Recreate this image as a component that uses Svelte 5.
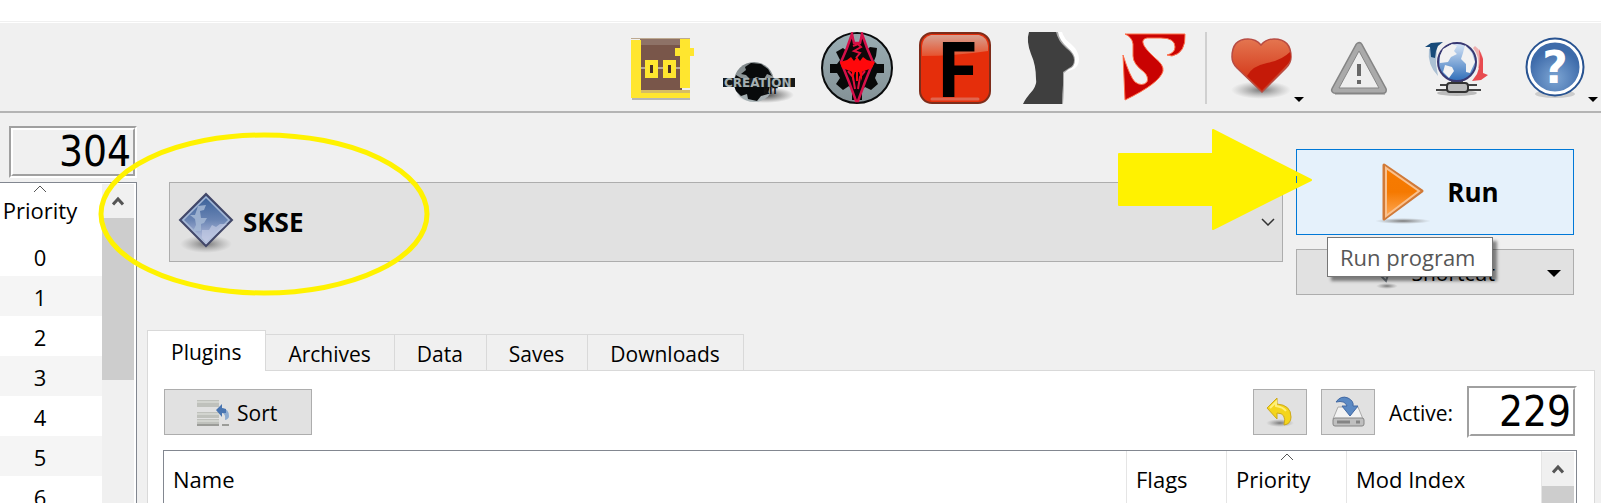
<script lang="ts">
	let tabs = ['Plugins', 'Archives', 'Data', 'Saves', 'Downloads'];
	let activeTab = $state('Plugins');
	let program = $state('SKSE');
	let priorities = [0, 1, 2, 3, 4, 5, 6];
</script>

{#snippet lcd(value: number, label: string)}
	<output class="lcd" aria-label={label}><span>{value}</span></output>
{/snippet}

{#snippet sortMark()}
	<svg class="sort-mark" width="14" height="8" viewBox="0 0 14 8"><path d="M1 7 7 1l6 6" fill="none" stroke="#555" /></svg>
{/snippet}

{#snippet scrollbar(thumb: string)}
	<div class="scrollbar">
		<button class="scroll-up" aria-label="Scroll up">
			<svg width="12" height="10" viewBox="0 0 12 10"><path d="M1 8.500 6 3l5 5.500" fill="none" stroke="#555" stroke-width="3" /></svg>
		</button>
		<div class="thumb {thumb}"></div>
	</div>
{/snippet}

<div class="window">
	<div class="titlebar"></div>
	<header class="toolbar">
		<div class="tools">
			<button aria-label="LOOT">
				<svg viewBox="0 0 72 72">
					<path d="M7 67h58" stroke="#b5b5b5" stroke-width="2" />
					<path fill="#79564a" d="M15 7h42v51H15z" />
					<path fill="#8e7267" d="M15 7h42v6H15z" />
					<path d="M6 6.500h59" stroke="#bda991" />
					<path d="M16 36h40" stroke="#b6a7a0" stroke-width="2" />
					<path fill="#ffe62f" d="M6 8h10v52h49v6H6z" />
					<path d="M16 59.500h49" stroke="#d6bd63" stroke-width="3" />
					<path fill="#ffe62f" d="M55 7h10v9h4v8h-4v32H55V24h-5v-8h5z" />
					<g fill="#4b3028" stroke="#ffe62f" stroke-width="5">
						<path d="M22.500 30.500h8v13h-8zM40.500 30.500h8v13h-8z" />
					</g>
				</svg>
			</button>
			<button aria-label="Creation Kit">
				<svg viewBox="0 0 72 72">
					<defs>
						<radialGradient id="ck-shadow"><stop stop-color="#444" /><stop offset="1" stop-color="#555" stop-opacity="0" /></radialGradient>
						<linearGradient id="ck-globe" x2="0" y2="1"><stop stop-color="#7d8587" /><stop offset="1" stop-color="#aab4b7" /></linearGradient>
					</defs>
					<ellipse cx="42" cy="63" rx="29" ry="8" fill="url(#ck-shadow)" />
					<circle cx="31" cy="50" r="20" fill="url(#ck-globe)" />
					<path fill="#080a0b" d="m22 35 6-4 10 1 7 5 4 7-5-2-3 5-8-2-5 3-5-5-5-1 5-4zM13 43l5 3 7 1v5l7 3 15-2-2 9-7 2-4 5-9-2-1-5-6 2-5-5-3-8z" />
					<path fill="#15191a" d="M0 46h72v9H0z" />
					<text class="creation" x="1" y="55">CREATION</text>
					<text class="kit" x="40" y="62">KIT</text>
				</svg>
			</button>
			<button aria-label="Skyrim">
				<svg viewBox="0 0 72 72">
					<defs><linearGradient id="sky" x2="0" y2="1"><stop stop-color="#9aaeb4" /><stop offset="1" stop-color="#849196" /></linearGradient></defs>
					<circle cx="36" cy="36" r="35" fill="url(#sky)" stroke="#090b0c" stroke-width="2" />
					<path fill="#080909" d="m30 12 12 0 2 7 5-4 7 1-1 8-2 5 3 3h7v9h-7l-2 5 3 6-7 6-6-3-3 3v10h-10V57l-3-3-6 4-7-6 4-6-3-5H9v-9h7l3-4-4-8 7-4 5 4z" />
					<path fill="#0d0809" stroke="#d5104a" stroke-width="2.500" d="m31 2-5 14-6 14 8 20 7 19h2l7-19 8-20-6-14-5-14-2 9H33z" />
					<path fill="#91a3a8" d="M33 2h6l-1 6h-4z" />
					<path d="M32 14l5-2 3 3-7 4 6 2-4 5m-8 13 5 6 2 12m10-18-5 6-2 12" fill="none" stroke="#e0103f" stroke-width="2" />
					<path fill="#ff080b" d="m19 30 7-2 4-3 3 4 3-4 3 4 3-4 4 3 8 2-3 6-8 3-2 1v9l-3-9h-1v9h-2v-9h-1l-3 9v-9l-2-1-8-3z" />
				</svg>
			</button>
			<button aria-label="FNIS">
				<svg viewBox="0 0 72 72">
					<defs><linearGradient id="gloss" x2="0" y2="1"><stop stop-color="#d8a090" /><stop offset="1" stop-color="#e6532e" /></linearGradient></defs>
					<rect x="1" y="1" width="70" height="70" rx="12" fill="#e52e0b" stroke="#7d2d1b" stroke-width="2" />
					<path fill="url(#gloss)" d="M12 3h48q8 2 9 11v5Q36 24 3 24V14q1-9 9-11z" />
					<path d="M13 67h46" stroke="#e0654f" stroke-width="3" stroke-linecap="round" />
					<text class="letter-f" x="17" y="65">F</text>
				</svg>
			</button>
			<button aria-label="BodySlide">
				<svg viewBox="0 0 72 72">
					<path fill="#fff" d="M38 0h7q2 7 9 12 8 7 8 15 0 9-8 11l-8 3z" />
					<path fill="#a8a8a8" d="M38 0h3q1 8 10 16 7 6 7 12 0 7-6 9l-5 4q0 20-1 31h-8z" />
					<path fill="#3f3f3f" d="M12 0h27q2 9 10 16 8 6 8 12 0 6-5 8-3 2-6 4v13q-1 9-1 19H6q2-5 10-14 4-6 3-11 0-14-5-25-5-13-2-22z" />
				</svg>
			</button>
			<button aria-label="Script tool">
				<svg viewBox="0 0 72 72">
					<path fill="#c90202" stroke="#ff704b" d="M10 2h60q1 19-13 22l-5-1q8-2 8-8Q60 6 46 6H32q-5 1-4 5 1 5 12 15 9 7 8 13-3 12-38 29L8 23q7 22 12 27 7 5 12 0 2-5-3-10-11-8-11-16V12q-1-7-8-10z" />
				</svg>
			</button>
		</div>
		<div class="separator"></div>
		<div class="tools">
			<button aria-label="Endorse">
				<svg viewBox="0 0 72 72">
					<defs>
						<radialGradient id="shadow"><stop stop-color="#777" /><stop offset="1" stop-color="#999" stop-opacity="0" /></radialGradient>
						<linearGradient id="heart" x2="0" y2="1"><stop stop-color="#e47650" /><stop offset="1" stop-color="#cf260a" /></linearGradient>
					</defs>
					<ellipse cx="36" cy="58" rx="30" ry="9" fill="url(#shadow)" />
					<path fill="url(#heart)" stroke="#b84c43" stroke-width="1.500" d="M36 13q5-6 13-6 17 0 17 18 0 6-5 11L37 60 12 36q-5-5-5-11Q7 7 23 7q8 0 13 6z" />
					<path fill="#c51a08" d="M65 20q3 8-5 15L37 58 22 44q5-10 20-13 15-3 23-11z" />
				</svg>
				<span class="menu-arrow"></span>
			</button>
			<button aria-label="Notifications">
				<svg viewBox="0 0 72 72">
					<path d="M12 62h50" stroke="#bbb" stroke-width="2" />
					<path d="M36 14 12 58h48z" fill="#e7e7e7" stroke="#858585" stroke-width="8" stroke-linejoin="round" />
					<path d="M36 14 12 58h48z" fill="#e7e7e7" stroke="#aaa" stroke-width="5" stroke-linejoin="round" />
					<path d="M36 19 16 56h40z" fill="#eee" stroke="#858585" />
					<path d="M36 32v12m0 4v4" stroke="#686868" stroke-width="4" />
				</svg>
			</button>
			<button aria-label="Check for updates">
				<svg viewBox="0 0 72 72">
					<defs><linearGradient id="sea" x2="0" y2="1"><stop stop-color="#d9e7f8" /><stop offset="1" stop-color="#2f6eb9" /></linearGradient></defs>
					<ellipse cx="36" cy="61" rx="20" ry="3" fill="#bbb" />
					<path d="M19 53h37M15 58h45" stroke="#444" stroke-width="2" />
					<path d="M30 49h12v3H30z" fill="#555" />
					<rect x="26" y="51" width="21" height="9" rx="3" fill="#bbb" stroke="#333" stroke-width="2" />
					<path fill="#acc1d4" d="M8 17q-2 16 9 27l-2-12 1-17z" />
					<path fill="#174a79" d="m4 15 6-4 12-1-5 4-2 5-1 7-4-1-1-10z" />
					<path fill="#efb0af" d="M54 14q8 6 8 15l-1 8-4-1q2-12-5-20z" />
					<path fill="#e84b50" d="m58 17 4 10v14l5 2-7 5-9 1 5-7q4-9 2-25z" />
					<circle cx="36" cy="30" r="19" fill="url(#sea)" stroke="#393973" stroke-width="2" />
					<path fill="#f2f2f2" d="m22 17 9-5 5 2-3 5 3 3-6 3-3 5-8 1 0-7zm22-4 7 8 3 9-5 11-4-1 0-8-5-5 2-6zM24 33l7 2 2 4-5 7-6-6z" />
				</svg>
			</button>
			<button aria-label="Help">
				<svg viewBox="0 0 72 72">
					<defs><radialGradient id="help" cy=".7"><stop stop-color="#7da5d3" /><stop offset="1" stop-color="#3e6baa" /></radialGradient></defs>
					<ellipse cx="36" cy="62" rx="20" ry="4" fill="#ccc" />
					<circle cx="36" cy="35" r="28" fill="url(#help)" stroke="#285391" stroke-width="3" />
					<circle cx="36" cy="35" r="26" fill="none" stroke="#fff" stroke-width="3" />
					<text class="question" x="36" y="51">?</text>
				</svg>
				<span class="menu-arrow"></span>
			</button>
		</div>
	</header>

	<div class="content">
		<aside class="mods">
			{@render lcd(304, 'Active mods')}
			<div class="mod-list">
				<table>
					<thead>
						<tr><th>{@render sortMark()}Priority</th></tr>
					</thead>
					<tbody>
						{#each priorities as priority}
							<tr><td>{priority}</td></tr>
						{/each}
					</tbody>
				</table>
				{@render scrollbar('long')}
			</div>
		</aside>

		<main>
			<section class="launcher">
				<div class="program">
					<select bind:value={program} aria-label="Program">
						<option>SKSE</option>
					</select>
					<svg class="program-icon" width="64" height="64" viewBox="0 0 64 64">
						<defs><linearGradient id="diamond" x2="0" y2="1"><stop stop-color="#345d96" /><stop offset=".5" stop-color="#6984b3" /><stop offset="1" stop-color="#d4d5ef" /></linearGradient></defs>
						<ellipse cx="32" cy="54" rx="26" ry="9" fill="url(#shadow)" />
						<path d="M32 4 58 30 32 56 6 30z" fill="url(#diamond)" stroke="#424768" stroke-width="2" />
						<path d="M32 7 55 30 32 53 9 30z" fill="none" stroke="#a8b9d5" stroke-width="1.500" />
						<path fill="#a5b9d5" opacity=".85" d="m24 16 8-1-2 5-4 1 1 7h6l-3 5-3 1v7l-8 0 3-6-1-6-5-4 5 0z" />
						<path fill="#c0c9e3" opacity=".7" d="m28 48 0-8 7 0 3-5 4 2 4-3h7L32 53z" />
					</svg>
					<svg class="program-arrow" width="14" height="8" viewBox="0 0 14 8"><path d="m1 1 6 6 6-6" fill="none" stroke="#333" stroke-width="1.500" /></svg>
				</div>
				<div class="actions">
					<button class="run">
						<svg width="64" height="64" viewBox="0 0 64 64">
							<defs>
								<linearGradient id="run" x2="0" y2="1"><stop stop-color="#f77b00" /><stop offset=".5" stop-color="#f57900" /><stop offset="1" stop-color="#ffad5e" /></linearGradient>
							</defs>
							<ellipse cx="32" cy="61" rx="28" ry="3" fill="url(#shadow)" />
							<path d="M13 5v54l38-28z" fill="url(#run)" stroke="#d17a37" stroke-width="3" stroke-linejoin="round" />
							<path d="M15 8v48l33-25z" fill="none" stroke="#fac18d" stroke-width="2" />
						</svg>
						Run
					</button>
					<button class="shortcut">
						<svg width="24" height="36" viewBox="0 0 24 36">
							<ellipse cx="12" cy="31" rx="11" ry="3" fill="url(#shadow)" />
							<path d="m4 19 7 7 2-6" fill="#d8dee3" stroke="#737b82" stroke-width="2" />
						</svg>
						Shortcut
						<span class="drop"></span>
					</button>
					<div class="tooltip" role="tooltip">Run program</div>
				</div>
			</section>

			<div class="tabs" role="tablist">
				{#each tabs as tab}
					<button role="tab" aria-selected={activeTab === tab} class:active={activeTab === tab} onclick={() => (activeTab = tab)}>{tab}</button>
				{/each}
			</div>

			<section class="pane">
				<div class="pane-bar">
					<button class="sort">
						<svg width="34" height="30" viewBox="0 0 34 30">
							<path fill="#bfc1bc" d="M1 2h22v7H1zM1 14h22v6H1zM1 21h22v6H1z" />
							<path d="M1 4h22M1 16h22M1 23h22" stroke="#d2d4cf" stroke-width="2" />
							<path d="M1 27h22m3 0h7" stroke="#9b9c98" stroke-width="2" />
							<path fill="#8dabd0" d="M26 10q7 1 7 8 0 3-4 4 1-6-3-7z" />
							<path fill="#4975b1" d="m20 12 6-6v4l4 1v4h-4v4z" />
						</svg>
						Sort
					</button>
					<div class="pane-tools">
						<button class="square" aria-label="Restore backup">
							<svg width="32" height="32" viewBox="0 0 32 32">
								<ellipse cx="16" cy="27" rx="14" ry="4" fill="url(#shadow)" />
								<path fill="#f4d51c" stroke="#cda91b" d="M3 12 13 2v6q14 1 14 13 0 7-7 8 3-12-7-12v6z" />
								<path d="m6 12 6-6v4q7 1 10 5" fill="none" stroke="#ffef79" stroke-width="2" />
							</svg>
						</button>
						<button class="square" aria-label="Create backup">
							<svg width="36" height="34" viewBox="0 0 36 34">
								<path fill="#f3f3f3" stroke="#aaa" d="m8 12-5 12h30l-5-12z" />
								<rect x="3" y="23" width="31" height="8" rx="2" fill="#bfbfbf" stroke="#858585" />
								<path d="M7 27h13m6 0h4" stroke="#858585" stroke-width="3" />
								<path fill="#5b89c3" stroke="#4168a3" d="M6 7Q11 0 18 3q6 3 5 8h5l-8 10-8-10h5q-2-6-11-4z" />
							</svg>
						</button>
						<span class="active-label">Active:</span>
						{@render lcd(229, 'Active plugins')}
					</div>
				</div>
				<div class="plugin-list">
					<table>
						<thead>
							<tr>
								<th>Name</th>
								<th class="flags">Flags</th>
								<th class="priority">{@render sortMark()}Priority</th>
								<th class="mod-index">Mod Index</th>
							</tr>
						</thead>
					</table>
					{@render scrollbar('short')}
				</div>
			</section>
		</main>
	</div>

	<svg class="ring" width="332" height="164" viewBox="0 0 332 164"><ellipse cx="166" cy="82" rx="163" ry="79" fill="none" stroke="#fff200" stroke-width="5" /></svg>
	<svg class="pointer" width="194" height="102" viewBox="0 0 194 102">
		<path d="M1 25h94V1l98 50-98 49V76H1z" fill="#fff200" stroke="#fff200" stroke-width="2" stroke-linejoin="round" />
		<path d="M178.500 47v7" stroke="#0078d7" />
	</svg>
</div>

<style>
	:global(body) {
		margin: 0;
		background: #f0f0f0;
	}

	.window {
		position: relative;
		height: 100vh;
		overflow: hidden;
		background: #f0f0f0;
		color: #000;
		font: 22px/30px 'Open Sans', 'Noto Sans', sans-serif;
	}

	button {
		box-sizing: border-box;
		padding: 0;
		border: 1px solid #adadad;
		background: #e1e1e1;
		color: #000;
		font: 21px/30px 'Open Sans', 'Noto Sans', sans-serif;
	}

	svg {
		display: block;
		flex: none;
	}

	.titlebar {
		height: 21px;
		background: #fff;
		border-bottom: 1px solid #f0f0f0;
	}

	.toolbar {
		display: flex;
		justify-content: flex-end;
		gap: 18px;
		padding: 9px 10px 7px;
		border-top: 1px solid #fff;
		border-bottom: 2px solid #b4b4b4;
	}

	.tools {
		display: flex;
		gap: 26px;

		& button {
			position: relative;
			width: 72px;
			height: 72px;
			border: none;
			background: none;
		}
	}

	.separator {
		width: 2px;
		background: #d0d0d0;
	}

	.menu-arrow {
		position: absolute;
		right: -7px;
		bottom: 2px;
		border: 5px solid transparent;
		border-top-color: #000;
		border-bottom: none;
	}

	.creation {
		font: bold 12px 'DejaVu Sans', sans-serif;
		fill: #a5b0b2;
	}

	.kit {
		font: bold 8px 'DejaVu Sans', sans-serif;
		fill: #111;
	}

	.letter-f {
		font: bold 77px/72px 'Open Sans', sans-serif;
	}

	.question {
		font: bold 44px 'DejaVu Sans', sans-serif;
		fill: #fff;
		text-anchor: middle;
	}

	.content {
		display: flex;
	}

	.mods {
		width: 137px;
		flex: none;
		padding-top: 13px;

		& .lcd {
			width: 128px;
			margin: 0 0 4px 9px;
			background: #f0f0f0;
		}
	}

	.lcd {
		display: block;
		box-sizing: border-box;
		height: 52px;
		border: 2px solid;
		border-color: #a0a0a0 #fff #fff #a0a0a0;

		& span {
			display: block;
			box-sizing: border-box;
			height: 48px;
			padding-right: 2px;
			border: 2px solid;
			border-color: #fff #a0a0a0 #a0a0a0 #fff;
			font: 42px/44px 'DejaVu Sans Condensed', 'DejaVu Sans', sans-serif;
			text-align: right;
		}
	}

	table {
		border-collapse: collapse;
		width: 100%;
	}

	th,
	td {
		padding: 0;
		font-weight: normal;
	}

	th {
		position: relative;
		height: 53px;
	}

	.sort-mark {
		position: absolute;
		top: 2px;
		left: 0;
		right: 0;
		margin: 0 auto;
	}

	.mod-list {
		display: flex;
		border: 1px solid #828790;
		border-left: none;
		background: #fff;

		& th,
		& td {
			box-sizing: border-box;
			padding: 1px 22px 0 0;
			text-align: center;
		}

		& .sort-mark {
			right: 22px;
		}

		& td {
			height: 40px;
		}

		& tbody tr:nth-child(even) {
			background: #f5f5f5;
		}
	}

	.scrollbar {
		width: 32px;
		flex: none;
		margin: 1px 2px 1px 0;
		background: #f0f0f0;
	}

	.scroll-up {
		display: flex;
		align-items: center;
		justify-content: center;
		width: 32px;
		height: 34px;
		border: none;
		background: #f0f0f0;
	}

	.thumb {
		background: #cdcdcd;

		&.long {
			height: 162px;
		}

		&.short {
			height: 100px;
		}
	}

	main {
		flex: 1;
		min-width: 0;
		padding: 36px 6px 0 10px;
	}

	.launcher {
		display: flex;
		gap: 13px;
		padding: 0 21px 0 22px;
	}

	.program {
		display: grid;
		flex: 1;
		align-items: center;
		height: 80px;
		margin-top: 33px;

		& > * {
			grid-area: 1 / 1;
		}

		& select {
			width: 100%;
			height: 80px;
			padding: 0 40px 0 73px;
			appearance: none;
			border: 1px solid #adadad;
			border-radius: 0;
			background: #e1e1e1;
			color: #000;
			font: bold 26px 'Open Sans', 'Noto Sans', sans-serif;
		}
	}

	.program-icon {
		margin-left: 5px;
		pointer-events: none;
	}

	.program-arrow {
		justify-self: end;
		margin-right: 8px;
		pointer-events: none;
	}

	.actions {
		position: relative;
		width: 278px;
		flex: none;
	}

	.run {
		display: flex;
		align-items: center;
		justify-content: center;
		gap: 12px;
		width: 100%;
		height: 86px;
		border-color: #0078d7;
		background: #e5f1fb;
		font-size: 26px;
		font-weight: bold;
	}

	.shortcut {
		display: flex;
		align-items: center;
		justify-content: flex-end;
		gap: 12px;
		width: 100%;
		height: 46px;
		margin-top: 14px;
		padding: 2px 12px 0 0;
	}

	.drop {
		margin-left: 40px;
		border: 7px solid transparent;
		border-top-color: #000;
		border-bottom: none;
	}

	.tooltip {
		position: absolute;
		top: 88px;
		left: 31px;
		padding: 4px 16px 4px 12px;
		border: 1px solid #767676;
		background: #fff;
		box-shadow: 4px 4px 3px rgba(0, 0, 0, 0.45);
		color: #575757;
		white-space: nowrap;
	}

	.tabs {
		display: flex;
		align-items: flex-end;
		margin-top: 35px;

		& button {
			height: 36px;
			padding: 2px 23px 0 22px;
			border: 1px solid #d9d9d9;
			border-width: 1px 1px 0 0;
			background: #f0f0f0;
		}

		& .active {
			z-index: 1;
			height: 41px;
			margin-bottom: -1px;
			padding: 2px 24px 0 23px;
			border-left-width: 1px;
			background: #fff;
		}
	}

	.pane {
		padding: 15px 17px 0 15px;
		border: 1px solid #d9d9d9;
		background: #fff;
	}

	.pane-bar {
		display: flex;
		align-items: center;
		justify-content: space-between;
		margin-bottom: 12px;
		padding-left: 1px;
	}

	.sort {
		display: flex;
		align-items: center;
		gap: 7px;
		width: 148px;
		height: 46px;
		padding: 2px 0 0 31px;
	}

	.pane-tools {
		display: flex;
		align-items: center;
		gap: 14px;

		& .lcd {
			width: 110px;
		}
	}

	.square {
		display: flex;
		align-items: center;
		justify-content: center;
		width: 54px;
		height: 46px;
	}

	.active-label {
		padding-top: 2px;
		font-size: 21px;
	}

	.plugin-list {
		display: flex;
		align-items: flex-start;
		height: 120px;
		border: 1px solid #828790;

		& table {
			table-layout: fixed;
		}

		& th {
			box-sizing: border-box;
			height: 60px;
			padding: 0 0 4px 9px;
			border-right: 1px solid #e5e5e5;
			text-align: left;
		}

		& .flags {
			width: 100px;
		}

		& .priority {
			width: 120px;
		}

		& .mod-index {
			width: 195px;
		}
	}

	.ring,
	.pointer {
		position: absolute;
		pointer-events: none;
	}

	.ring {
		top: 132px;
		left: 98px;
	}

	.pointer {
		top: 129px;
		right: 289px;
	}
</style>
